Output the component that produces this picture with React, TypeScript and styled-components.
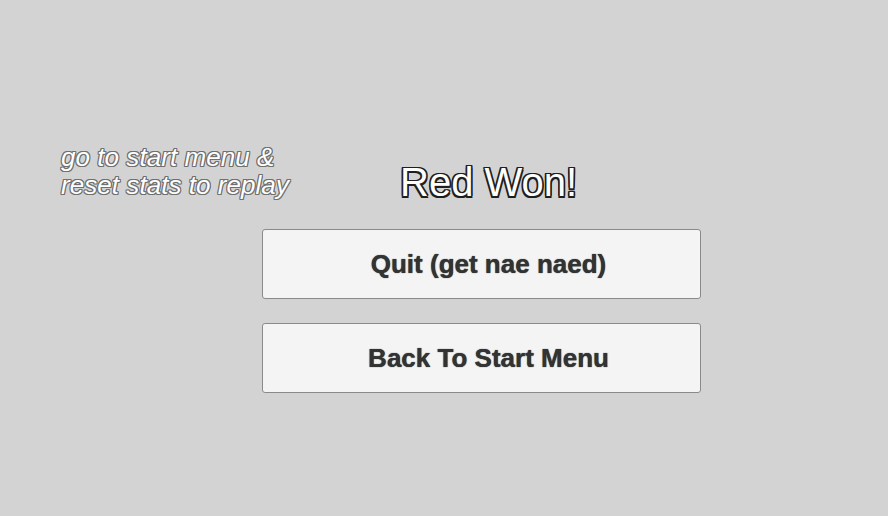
import React from 'react';
import styled, { createGlobalStyle } from 'styled-components';

const GlobalStyle = createGlobalStyle`
    html, body {
        margin: 0;
        padding: 0;
        background: #d3d3d3;
    }
    body {
        font-family: "Liberation Sans", Arial, sans-serif;
    }
`;

const Screen = styled.div`
    width: 888px;
    height: 516px;
    background: #d3d3d3;
    overflow: hidden;
    display: flex;
    flex-direction: column;
    padding-top: 143px;
    box-sizing: border-box;
`;

const TopRow = styled.div`
    display: flex;
    align-items: flex-start;
    padding-left: 61px;
`;

const Hint = styled.div`
    width: 240px;
    font-size: 26px;
    line-height: 28px;
    font-style: italic;
    letter-spacing: 0.05px;
    color: #ffffff;
    text-shadow:
        -1px -1px 0 #6f6f6f,
        1px -1px 0 #6f6f6f,
        -1px 1px 0 #6f6f6f,
        1px 1px 0 #6f6f6f,
        0 -1px 0 #6f6f6f,
        0 1px 0 #6f6f6f,
        -1px 0 0 #6f6f6f,
        1px 0 0 #6f6f6f;
`;

const Title = styled.h1`
    margin: 16px 0 0 99px;
    font-size: 40px;
    line-height: 46px;
    font-weight: 400;
    color: #ffffff;
    text-shadow:
        -1.5px -1.5px 0 #1e1e1e,
        1.5px -1.5px 0 #1e1e1e,
        -1.5px 1.5px 0 #1e1e1e,
        1.5px 1.5px 0 #1e1e1e,
        0 -1.5px 0 #1e1e1e,
        0 1.5px 0 #1e1e1e,
        -1.5px 0 0 #1e1e1e,
        1.5px 0 0 #1e1e1e;
`;

const Menu = styled.div`
    display: flex;
    flex-direction: column;
    gap: 24px;
    margin: 24px 0 0 262px;
    width: 439px;
`;

const MenuButton = styled.button`
    height: 70px;
    width: 100%;
    box-sizing: border-box;
    padding: 0 0 0 14px;
    background: #f4f4f4;
    border: 1px solid #8a8a8a;
    border-radius: 3px;
    font-family: "Liberation Sans", Arial, sans-serif;
    font-size: 26px;
    font-weight: 700;
    letter-spacing: 0;
    color: #333333;
    text-shadow: 0 0 1px #222;
    cursor: pointer;
`;

export default function App() {
    return (
        <>
            <GlobalStyle />
            <Screen>
                <TopRow>
                    <Hint>
                        go to start menu &amp;
                        <br />
                        reset stats to replay
                    </Hint>
                    <Title>Red Won!</Title>
                </TopRow>
                <Menu>
                    <MenuButton>Quit (get nae naed)</MenuButton>
                    <MenuButton>Back To Start Menu</MenuButton>
                </Menu>
            </Screen>
        </>
    );
}
